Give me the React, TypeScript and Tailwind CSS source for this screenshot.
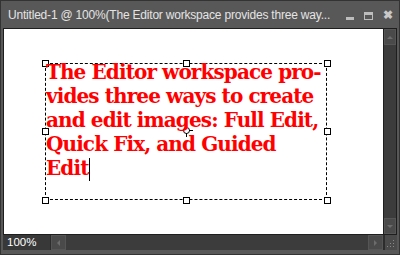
import type { ReactElement } from "react";

function Handle({ x, y }: { x: number; y: number }): ReactElement {
  return (
    <div
      className="absolute w-[7px] h-[7px] bg-white border border-black"
      style={{ left: x - 3, top: y - 3 }}
    />
  );
}

export default function App(): ReactElement {
  const handles = [
    [41, 34], [182, 34], [323, 34],
    [41, 102], [323, 102],
    [41, 171], [182, 171], [323, 171],
  ];

  return (
    <div className="w-[400px] h-[255px] bg-[#585858] flex flex-col border border-[#333] font-['Liberation_Sans',sans-serif]">
      {/* Title bar */}
      <div className="h-[27px] flex items-center pl-[7px] pr-[6px] text-[12px] tracking-[-0.2px] text-[#e4e4e4]">
        <span className="flex-1 whitespace-nowrap overflow-hidden">
          Untitled-1 @ 100%(The Editor workspace provides three way...
        </span>
        <div className="flex items-center gap-[10px] ml-2">
          <span className="w-[8px] h-[3px] bg-[#bdbdbd] mt-[8px]" />
          <span className="w-[9px] h-[8px] border border-[#bdbdbd] border-t-[3px] mt-[2px]" />
          <span className="text-[#c8c8c8] text-[12px] font-bold leading-none">✖</span>
        </div>
      </div>

      {/* Canvas + vertical scrollbar */}
      <div className="flex flex-1 mx-[2px] border border-[#1e1e1e]">
        <div className="relative flex-1 bg-white overflow-hidden">
          <div className="absolute left-[41px] top-[34px] w-[282px] h-[137px] border border-dashed border-black" />
          {handles.map(([x, y], i) => (
            <Handle key={i} x={x} y={y} />
          ))}
          {/* center crosshair */}
          <div className="absolute left-[176px] top-[95px] w-[13px] h-[13px]">
            <svg width="13" height="13" viewBox="0 0 13 13">
              <circle cx="6.5" cy="6.5" r="3" fill="none" stroke="#000" strokeWidth="1" />
              <path d="M6.5 0v4M6.5 9v4M0 6.5h4M9 6.5h4" stroke="#000" strokeWidth="1" />
              <path d="M6.5 0v3" stroke="#00c8d8" strokeWidth="1" />
            </svg>
          </div>
          <div className="absolute left-[42px] top-[31px] whitespace-nowrap text-[20px] leading-[24px] tracking-[-0.9px] font-bold text-[#ff0000] font-['DejaVu_Serif',serif]">
            The Editor workspace pro-
            <br />
            vides three ways to create
            <br />
            and edit images: Full Edit,
            <br />
            Quick Fix, and Guided
            <br />
            Edit<span className="inline-block w-[1px] h-[23px] bg-black align-[-6px] ml-[1px]" />
          </div>
        </div>
        <div className="w-[13px] bg-[#3c3c3c] border-l border-[#1e1e1e] flex flex-col justify-between">
          <div className="h-[16px] bg-[#4a4a4a] border border-[#555] flex items-center justify-center">
            <span className="w-0 h-0 border-l-[3px] border-r-[3px] border-b-[3px] border-l-transparent border-r-transparent border-b-[#6c6c6c]" />
          </div>
          <div className="h-[16px] bg-[#4a4a4a] border border-[#555] flex items-center justify-center">
            <span className="w-0 h-0 border-l-[3px] border-r-[3px] border-t-[3px] border-l-transparent border-r-transparent border-t-[#6c6c6c]" />
          </div>
        </div>
      </div>

      {/* Status bar */}
      <div className="h-[15px] mx-[2px] mb-[4px] flex bg-[#3c3c3c]">
        <div className="w-[48px] bg-[#383838] border-r border-[#2c2c2c] text-[11.5px] text-white leading-[15px] pl-[4px]">
          100%
        </div>
        <div className="w-[15px] bg-[#4a4a4a] border border-[#555] flex items-center justify-center">
          <span className="w-0 h-0 border-t-[3px] border-b-[3px] border-r-[3px] border-t-transparent border-b-transparent border-r-[#6c6c6c]" />
        </div>
        <div className="flex-1" />
        <div className="w-[15px] bg-[#4a4a4a] border border-[#555] flex items-center justify-center">
          <span className="w-0 h-0 border-t-[3px] border-b-[3px] border-l-[3px] border-t-transparent border-b-transparent border-l-[#6c6c6c]" />
        </div>
        <div className="w-[14px] bg-[#4a4a4a] border-l-2 border-[#2c2c2c] relative">
          <svg className="absolute right-[2px] bottom-[2px]" width="8" height="8" viewBox="0 0 8 8">
            <rect x="6" y="0" width="1" height="1" fill="#888" />
            <rect x="3" y="3" width="1" height="1" fill="#888" />
            <rect x="6" y="3" width="1" height="1" fill="#888" />
            <rect x="0" y="6" width="1" height="1" fill="#888" />
            <rect x="3" y="6" width="1" height="1" fill="#888" />
            <rect x="6" y="6" width="1" height="1" fill="#888" />
          </svg>
        </div>
      </div>
    </div>
  );
}
